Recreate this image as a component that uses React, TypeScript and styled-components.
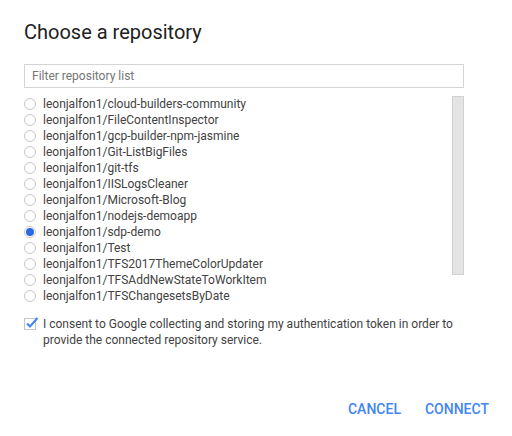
import React, { Fragment } from 'react';
import styled, { createGlobalStyle } from 'styled-components';

const GlobalStyle = createGlobalStyle`
body {
  margin: 0;
  background: #fff;
  font-family: Roboto, "Liberation Sans", sans-serif;
}
`;

const Dialog = styled.div`
  width: 512px;
  height: 436px;
  box-sizing: border-box;
  padding: 20px 15px 0 24px;
  display: flex;
  flex-direction: column;
`;

const Title = styled.h2`
  margin: 0;
  font-size: 20px;
  line-height: 24px;
  font-weight: 400;
  color: #212121;
`;

const Filter = styled.input`
  margin: 20px 0 0;
  width: 440px;
  height: 24px;
  box-sizing: border-box;
  border: 1px solid #d4d4d4;
  padding: 0 7px;
  font-family: inherit;
  font-size: 12px;
  color: #424242;
  outline: none;
  &::placeholder {
    color: #757575;
  }
`;

const RepoList = styled.div`
  position: relative;
  margin-top: 8px;
  width: 440px;
  height: 208px;
  overflow: hidden;
`;

const Thumb = styled.div`
  position: absolute;
  right: 0;
  top: 0;
  width: 12px;
  height: 179px;
  box-sizing: border-box;
  background: #e4e4e4;
  border: 1px solid #d2d2d2;
`;

const Row = styled.label`
  display: flex;
  align-items: center;
  height: 16px;
  font-size: 12px;
  color: #424242;
  cursor: pointer;
`;

const Radio = styled.span<{ $on?: boolean }>`
  width: 12px;
  height: 12px;
  box-sizing: border-box;
  border-radius: 50%;
  border: 1px solid #c6c6c6;
  margin-right: 7px;
  display: flex;
  align-items: center;
  justify-content: center;
  flex: none;
  &::after {
    content: '';
    width: 8px;
    height: 8px;
    border-radius: 50%;
    background: ${(p) => (p.$on ? '#2a6ae0' : 'transparent')};
  }
`;

const Consent = styled.div`
  margin-top: 12px;
  display: flex;
  align-items: flex-start;
  font-size: 12px;
  line-height: 16px;
  color: #424242;
  width: 440px;
`;

const Box = styled.span`
  position: relative;
  width: 12px;
  height: 12px;
  box-sizing: border-box;
  border: 1px solid #c6c6c6;
  margin: 2px 7px 0 0;
  flex: none;
  & svg {
    position: absolute;
    left: 0px;
    top: -3px;
  }
`;

const Actions = styled.div`
  margin-top: 43px;
  display: flex;
  justify-content: flex-end;
  gap: 8px;
`;

const Button = styled.button`
  border: none;
  background: none;
  padding: 0 8px;
  height: 36px;
  font-family: inherit;
  font-size: 14px;
  font-weight: 500;
  color: #4285f4;
  cursor: pointer;
`;

const repos = [
  'cloud-builders-community',
  'FileContentInspector',
  'gcp-builder-npm-jasmine',
  'Git-ListBigFiles',
  'git-tfs',
  'IISLogsCleaner',
  'Microsoft-Blog',
  'nodejs-demoapp',
  'sdp-demo',
  'Test',
  'TFS2017ThemeColorUpdater',
  'TFSAddNewStateToWorkItem',
  'TFSChangesetsByDate',
];

function App() {
  return (
    <Fragment>
      <GlobalStyle />
      <Dialog>
        <Title>Choose a repository</Title>
        <Filter placeholder="Filter repository list" />
        <RepoList>
          {repos.map((r) => (
            <Row key={r}>
              <Radio $on={r === 'sdp-demo'} />
              leonjalfon1/{r}
            </Row>
          ))}
          <Thumb />
        </RepoList>
        <Consent>
          <Box>
            <svg width="14" height="13" viewBox="0 0 14 13">
              <path d="M2 7.5 L5 10.5 L12.5 2" fill="none" stroke="#4285f4" strokeWidth="2" />
            </svg>
          </Box>
          <span>
            I consent to Google collecting and storing my authentication token in order to provide the connected repository service.
          </span>
        </Consent>
        <Actions>
          <Button>CANCEL</Button>
          <Button>CONNECT</Button>
        </Actions>
      </Dialog>
    </Fragment>
  );
}

export default App;
